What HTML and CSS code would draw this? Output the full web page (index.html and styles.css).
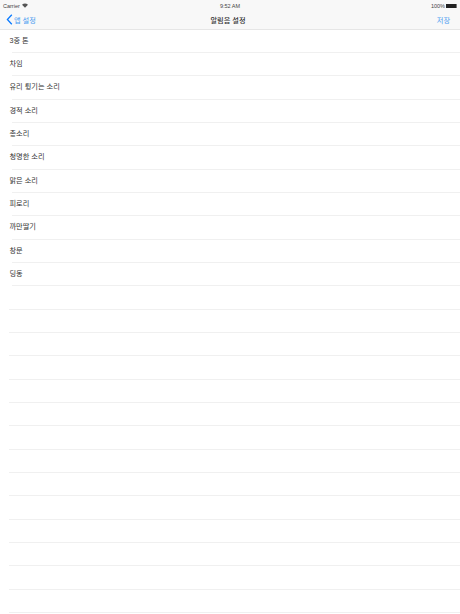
FILE: index.html
```html
<!DOCTYPE html>
<html lang="ko">
<head>
    <meta charset="UTF-8">
    <meta name="viewport" content="width=device-width, initial-scale=1.0">
    <title>알림음 설정</title>
<link rel="stylesheet" href="styles.css">
</head>
<body>
    <header class="top-bar">
        <div class="status-bar">
            <div class="status-left">
                <span>Carrier</span>
                <svg class="wifi" width="6" height="5" viewBox="0 0 14 10"><path d="M7 10 0 3Q7-2 14 3Z" fill="#555"/></svg>
            </div>
            <span class="status-time">9:52 AM</span>
            <div class="status-right">
                <span>100%</span>
                <span class="battery"></span>
            </div>
        </div>
        <nav class="nav-bar">
            <a class="nav-back">
                <svg width="7" height="11" viewBox="0 0 7 12"><path d="M6 .8 1.2 6 6 11.2" fill="none" stroke="#0a7aff" stroke-width="1.4"/></svg>
                <span>앱 설정</span>
            </a>
            <span class="nav-title">알림음 설정</span>
            <a class="nav-save">저장</a>
        </nav>
    </header>
    <ul class="sound-list">
        <li>3중 톤</li>
        <li>차임</li>
        <li>유리 튕기는 소리</li>
        <li>경적 소리</li>
        <li>총소리</li>
        <li>청명한 소리</li>
        <li>맑은 소리</li>
        <li>피로리</li>
        <li>까만딸기</li>
        <li>창문</li>
        <li>딩동</li>
        <li></li><li></li><li></li><li></li><li></li><li></li><li></li>
        <li></li><li></li><li></li><li></li><li></li><li></li><li></li>
    </ul>
</body>
</html>
```

FILE: styles.css
```css
body {
    margin: 0;
    height: 614px;
    overflow: hidden;
    background-color: #fff;
    color: #333;
    font-family: "Liberation Sans", "Noto Sans CJK KR", sans-serif;
}

.top-bar {
    height: 29.7px;
    box-sizing: border-box;
    background-color: #f8f8f8;
    border-bottom: 1px solid #e6e6e6;
}

.status-bar {
    display: grid;
    grid-template-columns: 1fr auto 1fr;
    align-items: center;
    height: 11px;
    padding: 0 3px;
    font-size: 5.5px;
    color: #444;
}

.status-left {
    display: flex;
    align-items: center;
    gap: 2px;
}

.status-time {
    font-weight: 500;
    font-size: 5.5px;
}

.status-right {
    display: flex;
    align-items: center;
    justify-content: flex-end;
    gap: 1px;
}

.battery {
    width: 10px;
    height: 4px;
    background-color: #222;
    border-right: 1px solid #777;
}

.nav-bar {
    display: grid;
    grid-template-columns: 1fr auto 1fr;
    align-items: center;
    height: 17px;
    padding: 0 10px 0 6px;
    font-size: 7.2px;
}

.nav-back {
    display: flex;
    align-items: center;
    gap: 1px;
    color: #4a9cf0;
}

.nav-title {
    font-weight: 500;
}

.nav-save {
    justify-self: end;
    color: #4a9cf0;
}

.sound-list {
    list-style-type: none;
    margin: 0;
    padding: 0;
}

.sound-list li {
    position: relative;
    height: 23.33px;
    padding-left: 9.5px;
    line-height: 22.5px;
    font-size: 7.2px;
    box-sizing: border-box;
}

.sound-list li::after {
    content: '';
    position: absolute;
    left: 12px;
    right: 0;
    bottom: 0;
    height: 1px;
    background-color: #f0f0f0;
}

.sound-list li:empty::after {
    left: 9px;
}
```
